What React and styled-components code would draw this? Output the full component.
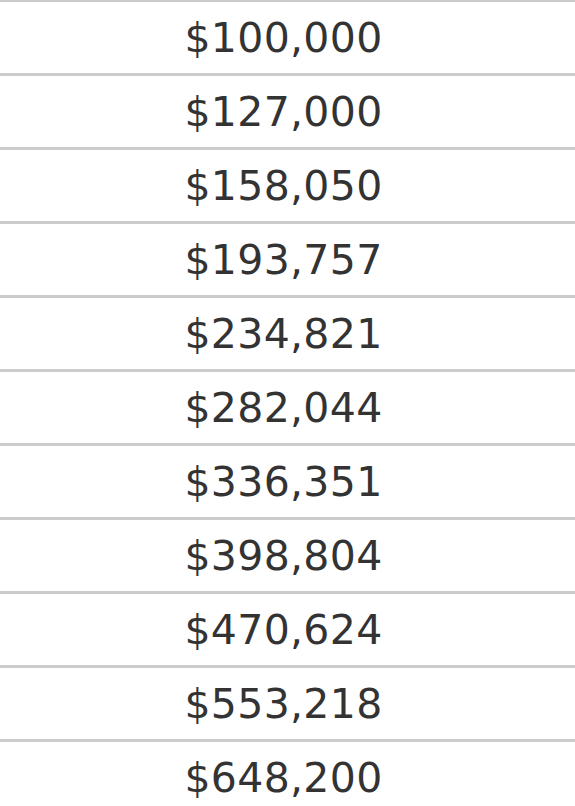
import React from 'react';
import styled, { createGlobalStyle } from 'styled-components';

const values = [
    '$100,000', '$127,000', '$158,050', '$193,757', '$234,821', '$282,044',
    '$336,351', '$398,804', '$470,624', '$553,218', '$648,200',
];

const App = () => {
    return (
        <>
            <Global />
            <Table>
                {values.map(v => (
                    <Row key={v}>{v}</Row>
                ))}
            </Table>
        </>
    );
};
export default App;

const Global = createGlobalStyle`
    html, body {
        margin: 0;
        padding: 0;
        background: #fff;
    }
`;

const Table = styled.div`
    display: flex;
    flex-direction: column;
    margin-top: -1px;
    font-family: "DejaVu Sans", Verdana, sans-serif;
`;

const Row = styled.div`
    height: 71px;
    border-top: 3px solid #cbcbcb;
    display: flex;
    align-items: center;
    justify-content: center;
    padding-right: 8px;
    font-size: 41px;
    letter-spacing: 0.3px;
    color: #333;
`;
